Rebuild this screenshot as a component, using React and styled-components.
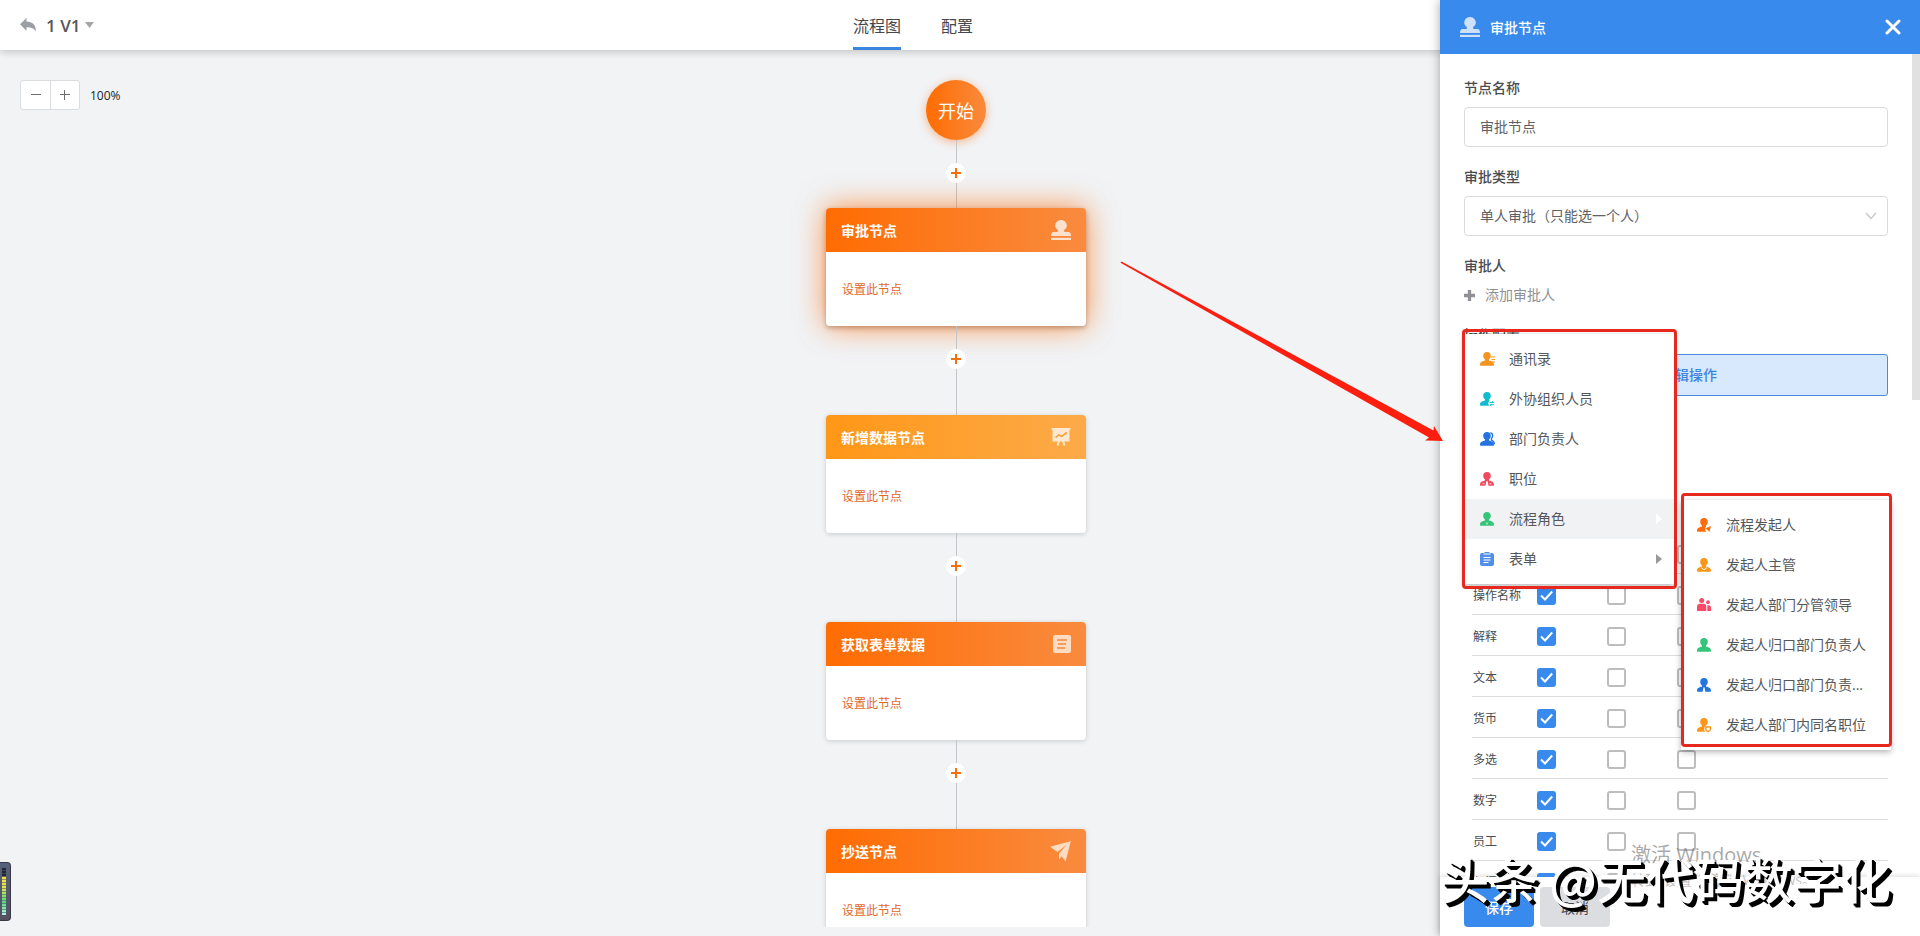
import React, { useState } from "react";
import styled, { createGlobalStyle, css } from "styled-components";

const GlobalStyle = createGlobalStyle`
  * {
    box-sizing: border-box;
  }
  body {
    margin: 0;
    color: #4a4c50;
    font-family: "Open Sans", "Noto Sans CJK SC", sans-serif;
    font-size: 14px;
  }
  button, input, select {
    font-family: inherit;
    font-size: inherit;
    color: inherit;
  }
  button {
    padding: 0;
    border: none;
    background: none;
    cursor: pointer;
  }
`;

const Page = styled.div`
  position: relative;
  display: flex;
  flex-direction: column;
  height: 100vh;
  overflow: hidden;
  background: #f1f3f5;
`;

/* top bar */
const Header = styled.header`
  position: relative;
  z-index: 1;
  display: grid;
  grid-template-columns: 1fr auto 1fr;
  flex: none;
  height: 50px;
  padding: 0 114px 0 20px;
  background: #fff;
  box-shadow: 0 2px 8px rgba(0, 0, 0, 0.2);
`;
const TitleArea = styled.div`
  display: flex;
  align-items: center;
  gap: 10px;
`;
const BackButton = styled.button`
  display: flex;
  color: #9b9ea3;
`;
const VersionButton = styled.button`
  display: flex;
  align-items: center;
  gap: 5px;
  white-space: nowrap;
  font-size: 17px;
  font-weight: 600;
  color: #55575b;
`;
const Tabs = styled.nav`
  display: flex;
  gap: 40px;
`;
const Tab = styled.a`
  display: flex;
  align-items: center;
  height: 50px;
  padding-top: 2px;
  border-bottom: 3px solid ${(p) => (p.$active ? "#3a86df" : "transparent")};
  color: #45474a;
  font-size: 16px;
  text-decoration: none;
`;

/* flow canvas */
const Canvas = styled.main`
  position: relative;
  flex: 1;
  min-height: 0;
  margin-bottom: 9px;
  padding: 30px 8px 0 0;
  overflow: hidden;
`;
const ZoomBar = styled.div`
  position: absolute;
  top: 30px;
  left: 20px;
  display: flex;
  align-items: center;
  gap: 10px;
  color: #222;
  font-size: 12px;
`;
const ZoomButtons = styled.div`
  display: flex;
  border: 1px solid #dadcdf;
  border-radius: 3px;
  background: #fff;
`;
const ZoomButton = styled.button`
  display: flex;
  align-items: center;
  justify-content: center;
  width: 29px;
  height: 28px;
  color: #6a6c70;
  & + & {
    border-left: 1px solid #dadcdf;
  }
`;
const Flow = styled.div`
  display: flex;
  flex-direction: column;
  align-items: center;
`;
const StartNode = styled.div`
  display: flex;
  flex: none;
  align-items: center;
  justify-content: center;
  width: 60px;
  height: 60px;
  border-radius: 50%;
  background: linear-gradient(90deg, #ff6c02, #f98a3c);
  box-shadow: 0 2px 8px rgba(255, 120, 30, 0.5);
  color: #fff;
  font-size: 18px;
`;
const Connector = styled.div`
  display: flex;
  flex: none;
  flex-direction: column;
  align-items: center;
  height: ${(p) => (p.$short ? 68 : 89)}px;
  padding-top: 23px;
  background: linear-gradient(#c3c5c9, #c3c5c9) center / 1px 100% no-repeat;
`;
const AddNodeButton = styled.button`
  display: flex;
  align-items: center;
  justify-content: center;
  width: 20px;
  height: 20px;
  border-radius: 50%;
  background: #fff;
  color: #f26f12;
`;
const NodeCard = styled.section`
  width: 260px;
  flex: none;
  border-radius: 4px;
  background: #fff;
  box-shadow: 0 1px 5px rgba(0, 0, 0, 0.18);
  ${(p) =>
    p.$active &&
    css`
      box-shadow: 0 2px 5px rgba(120, 60, 20, 0.4),
        0 0 30px rgba(255, 110, 10, 0.75);
    `}
`;
const NodeHead = styled.div`
  display: flex;
  align-items: center;
  justify-content: space-between;
  height: 44px;
  padding: 0 15px;
  border-radius: 4px 4px 0 0;
  background: ${(p) =>
    p.$tone === "amber"
      ? "linear-gradient(90deg, #ff9717, #fcaa49)"
      : "linear-gradient(90deg, #ff6c02, #f98b3f)"};
  color: #fff;
  font-weight: 700;
`;
const NodeBody = styled.div`
  display: flex;
  align-items: center;
  height: 74px;
  padding: 0 16px;
`;
const NodeLink = styled.button`
  color: #e2671f;
  font-size: 12px;
`;

/* right side panel */
const Panel = styled.aside`
  position: absolute;
  top: 0;
  right: 0;
  bottom: 0;
  z-index: 2;
  display: flex;
  flex-direction: column;
  width: 480px;
  background: #fff;
  box-shadow: 0 0 10px rgba(0, 0, 0, 0.35);
`;
const PanelHead = styled.div`
  display: flex;
  flex: none;
  align-items: center;
  gap: 10px;
  height: 54px;
  padding: 0 19px 0 20px;
  background: #388aed;
  color: #fff;
  font-weight: 500;
`;
const CloseButton = styled.button`
  display: flex;
  margin-left: auto;
`;
const PanelBody = styled.div`
  position: relative;
  flex: 1;
  min-height: 0;
  padding: 23px 32px 0 24px;
  overflow: hidden;
`;
const ScrollThumb = styled.div`
  position: absolute;
  top: 0;
  right: 0;
  width: 8px;
  height: 346px;
  background: #e1e1e2;
`;
const Field = styled.div`
  position: relative;
  display: flex;
  flex-direction: column;
  align-items: flex-start;
  gap: 8px;
  margin-bottom: 19px;
`;
const Label = styled.label`
  line-height: 22px;
  font-weight: 500;
`;
const control = css`
  width: 100%;
  height: 40px;
  padding: 0 15px 2px;
  border: 1px solid #d9dadd;
  border-radius: 4px;
  background: #fff;
  color: #606266;
  appearance: none;
`;
const TextInput = styled.input`
  ${control}
`;
const SelectWrap = styled.div`
  display: grid;
  width: 100%;
  align-items: center;
  & > * {
    grid-area: 1 / 1;
  }
  svg {
    justify-self: end;
    margin-right: 11px;
    pointer-events: none;
  }
`;
const Select = styled.select`
  ${control}
`;
const AddButton = styled.button`
  display: flex;
  align-items: center;
  gap: 10px;
  line-height: 20px;
  color: #8f9195;
`;
const EditButton = styled.button`
  width: 100%;
  height: 42px;
  padding: 0 0 2px 26px;
  border: 1px solid #4a8cdb;
  border-radius: 3px;
  background: #d8e8fd;
  color: #3d86e0;
  font-weight: 500;
`;

/* permission table */
const Table = styled.table`
  width: calc(100% - 8px);
  margin: 136px 0 0 8px;
  border-collapse: collapse;
  table-layout: fixed;
  font-size: 12px;
`;
const Row = styled.tr`
  height: 41px;
  border-bottom: 1px solid #dcdddf;
`;
const NameCell = styled.th`
  width: 65px;
  padding: 2px 0 0 1px;
  font-weight: 400;
  text-align: left;
  white-space: nowrap;
`;
const CheckCell = styled.td`
  width: 70px;
  padding: 4px 0 0;
`;
const CheckWrap = styled.span`
  display: grid;
  width: 19px;
  height: 19px;
  & > * {
    grid-area: 1 / 1;
  }
  svg {
    place-self: center;
    pointer-events: none;
  }
`;
const CheckInput = styled.input`
  width: 19px;
  height: 19px;
  margin: 0;
  border: 2px solid #bcbdbf;
  border-radius: 3px;
  background: #fff;
  appearance: none;
  &:checked {
    border-color: #388aed;
    background: #388aed;
  }
`;
const Footer = styled.div`
  display: flex;
  flex: none;
  gap: 6px;
  padding: 10px 24px 9px;
  box-shadow: 0 -1px 5px rgba(0, 0, 0, 0.14);
`;
const FooterButton = styled.button`
  width: 70px;
  height: 40px;
  border-radius: 4px;
  background: ${(p) => (p.$primary ? "#388aed" : "#dcdde1")};
  color: ${(p) => (p.$primary ? "#fff" : "#4a4c50")};
  font-weight: ${(p) => (p.$primary ? 500 : 400)};
`;

/* approver menus */
const menuBox = css`
  position: absolute;
  z-index: 3;
  width: 210px;
  padding: 5px 0;
  background: #fff;
  box-shadow: 0 2px 6px rgba(0, 0, 0, 0.3);
`;
const Menu = styled.div`
  ${menuBox}
  top: 79px;
  left: 0;
`;
const SubMenu = styled.div`
  ${menuBox}
  top: 166px;
  left: 217px;
`;
const MenuItem = styled.button`
  display: flex;
  align-items: center;
  gap: 15px;
  width: 100%;
  height: 40px;
  padding: 0 12px 0 16px;
  background: ${(p) => (p.$active ? "#f1f2f4" : "none")};
  text-align: left;
`;
const MenuText = styled.span`
  flex: 1;
  padding-bottom: 2px;
  color: #55575b;
  white-space: nowrap;
`;
const RedFrame = styled.div`
  position: absolute;
  inset: ${(p) => p.$inset};
  border: 3px solid #e7281e;
  border-radius: 4px;
  pointer-events: none;
`;

/* things lying over the page */
const Arrow = styled.svg`
  position: absolute;
  top: 260px;
  right: 476px;
  z-index: 4;
  pointer-events: none;
`;
const Meter = styled.div`
  position: absolute;
  left: 0;
  bottom: 15px;
  z-index: 4;
  width: 11px;
  height: 59px;
  padding: 5px 0 0 2px;
  border: 1px solid #3b3846;
  border-left: none;
  border-radius: 0 4px 4px 0;
  background: linear-gradient(#55617a, #54505f);
`;
const MeterBars = styled.div`
  width: 4px;
  height: 47px;
  background: repeating-linear-gradient(
      transparent 0 2px,
      rgba(77, 85, 104, 0.6) 2px 3px
    ),
    linear-gradient(#222831 0 8px, #f6e23c 9px, #e0e84c 20px, #4fdc7c 34px, #b8f4ec);
`;
const Activate = styled.div`
  position: absolute;
  right: 104px;
  bottom: 46px;
  z-index: 5;
  color: rgba(130, 130, 130, 0.5);
  font-size: 14px;
  line-height: 20px;
  pointer-events: none;
`;
const ActivateTitle = styled.div`
  color: rgba(120, 120, 120, 0.65);
  font-size: 20px;
  line-height: 30px;
`;
const Signature = styled.div`
  position: absolute;
  right: 29px;
  bottom: 28px;
  z-index: 6;
  color: #fff;
  font-family: "Noto Sans CJK SC", sans-serif;
  font-size: 49px;
  font-weight: 500;
  line-height: 60px;
  white-space: nowrap;
  text-shadow: 2px 2px 0 #000, 3px 3px 0 #000, 4px 4px 0 #000;
  pointer-events: none;
`;

const StampIcon = () => (
  <svg width="20" height="20" viewBox="0 0 20 20" fill="currentColor" opacity=".75">
    <path d="M10 0a5.6 5.6 0 0 1 5.8 5.4c0 2.2-1.2 3.4-2.4 4.4-.6.6-.4 2.2.6 2.2h3.4c1.6 0 2.6 1.2 2.6 4H0c0-2.8 1-4 2.6-4H6c1 0 1.2-1.6.6-2.2C5.4 8.8 4.2 7.6 4.2 5.4A5.6 5.6 0 0 1 10 0z" />
    <path d="M0 17.800h20V20H0z" />
  </svg>
);
const BoardIcon = () => (
  <svg width="20" height="20" viewBox="0 0 20 20" opacity=".75">
    <path d="M.5 1h19v1.800H18.500V14.500H1.500V2.800H.5z" fill="#fff" />
    <path d="M8 14 6.500 18.500M12 14l1.500 4.500" stroke="#fff" strokeWidth="2" />
    <path d="m4.500 10.500 3.300-2.700 3 1.500 5-4" fill="none" stroke="#f79b2d" strokeWidth="1.500" />
  </svg>
);
const FormIcon = () => (
  <svg width="18" height="18" viewBox="0 0 18 18">
    <rect width="18" height="18" rx="2" fill="#fddcc4" />
    <path d="M4 5h10M5 9h8M4 13h8" stroke="#f4863a" strokeWidth="1.600" />
  </svg>
);
const PlaneIcon = () => (
  <svg width="21" height="21" viewBox="0 0 21 21" fill="#fddcc4">
    <path d="M20.800.3 0 5.800l7.500 5.200L17 3.500 9 12.500V18.500l2.700-3.300 3.900 5.400z" />
  </svg>
);
const PlusIcon = ({ size = 10, weight = 2 }) => (
  <svg width={size} height={size} viewBox="0 0 10 10">
    <path d="M0 5h10M5 0v10" stroke="currentColor" strokeWidth={weight} />
  </svg>
);

// small person glyph, each kind carries its own badge
const badges = {
  contacts: <path d="M11 5h4M11.500 7.500h3.500M11.500 10h3.500" stroke="currentColor" />,
  outside: (
    <g>
      <circle cx="12" cy="11.500" r="3.600" fill="#fff" />
      <path d="M9.500 10.500h4l-1.500-1.200M14 12.700h-4l1.500 1.200" stroke="currentColor" fill="none" />
    </g>
  ),
  leader: (
    <path
      d="M10.500.8c2.800.6 2.600 4.200 1 5.700v1.700c1.800.6 2.700 1.800 2.900 4"
      stroke="currentColor"
      strokeWidth="1.400"
      fill="none"
    />
  ),
  post: (
    <g fill="#fff">
      <path d="M6.300 9.300h1.400l.8 4.700h-3z" />
      <path d="M2.500 11.500h2v.8h-2zM9.500 11.500h2v.8h-2z" />
    </g>
  ),
  role: <path d="m5.500 9.500 1.500 2 1.500-2L7 13z" fill="#fff" />,
  starter: (
    <g>
      <circle cx="11.500" cy="11" r="3.300" fill="#fff" />
      <path d="M8.300 10.600 14 8l-1.600 6-1.400-1.800z" fill="currentColor" />
    </g>
  ),
  manager: <path d="M4 9.600 7 11.800l3-2.200" stroke="#fff" fill="none" />,
  plain: null,
  tie: <path d="M6.400 9.500h1.200l.7 4.500H5.700z" fill="#fff" />,
  same: (
    <g>
      <circle cx="11" cy="11" r="3.800" fill="#fff" />
      <path
        d="M8.800 9h4.600v2.200c0 1.300-1 2-2.300 2.500-1.300-.5-2.300-1.200-2.300-2.500z"
        stroke="currentColor"
        strokeWidth="1.400"
        fill="none"
      />
    </g>
  ),
};

const MenuIcon = ({ kind, color }) => {
  if (kind === "form") {
    return (
      <svg width="14" height="14" viewBox="0 0 14 14" color={color}>
        <path
          d="M2 1h2.500V0h5v1H12c1 0 2 .8 2 2v9c0 1-.8 2-2 2H2c-1.200 0-2-1-2-2V3c0-1.200.8-2 2-2z"
          fill="currentColor"
        />
        <path d="M3.500 2h7M3.500 5.500h7M3.500 8h7M3.500 10.500h5" stroke="#fff" strokeWidth="1.100" />
      </svg>
    );
  }
  if (kind === "group") {
    return (
      <svg width="14" height="14" viewBox="0 0 14 14" fill={color}>
        <circle cx="4.700" cy="2.500" r="2.500" />
        <circle cx="11" cy="4.200" r="1.900" />
        <path d="M0 13V9c0-2 1.300-3.200 3-3.200h3.500C8.300 5.800 9.300 7 9.300 9v4z" />
        <path d="M10.300 13V7.200h1.200c1.600 0 2.500 1 2.500 2.500V13z" />
      </svg>
    );
  }
  return (
    <svg width="14" height="14" viewBox="0 0 14 14" color={color} overflow="visible">
      <path
        d="M7 0c2.400 0 3.800 1.600 3.800 3.800 0 1.800-.8 3-1.800 3.800v1c2.600.8 5 1.300 5 4.200 0 .7-.4 1-1 1H1c-.6 0-1-.3-1-1 0-2.900 2.400-3.400 5-4.200v-1c-1-.8-1.800-2-1.800-3.800C3.200 1.600 4.600 0 7 0z"
        fill="currentColor"
      />
      {badges[kind]}
    </svg>
  );
};

const nodes = [
  { title: "审批节点", icon: <StampIcon />, active: true },
  { title: "新增数据节点", icon: <BoardIcon />, tone: "amber" },
  { title: "获取表单数据", icon: <FormIcon /> },
  { title: "抄送节点", icon: <PlaneIcon /> },
];

const approverItems = [
  { text: "通讯录", kind: "contacts", color: "#f7941e" },
  { text: "外协组织人员", kind: "outside", color: "#12bcd0" },
  { text: "部门负责人", kind: "leader", color: "#2373e0" },
  { text: "职位", kind: "post", color: "#f2495f" },
  { text: "流程角色", kind: "role", color: "#35c57a", arrow: true, active: true },
  { text: "表单", kind: "form", color: "#5190ea", arrow: true },
];

const roleItems = [
  { text: "流程发起人", kind: "starter", color: "#fb6d0a" },
  { text: "发起人主管", kind: "manager", color: "#fb9619" },
  { text: "发起人部门分管领导", kind: "group", color: "#fa4a68" },
  { text: "发起人归口部门负责人", kind: "plain", color: "#35c57a" },
  { text: "发起人归口部门负责...", kind: "tie", color: "#2373e0" },
  { text: "发起人部门内同名职位", kind: "same", color: "#fb9619" },
];

const fieldNames = ["标题", "操作名称", "解释", "文本", "货币", "多选", "数字", "员工", "部门"];

const MenuList = ({ items }) =>
  items.map((item) => (
    <MenuItem key={item.text} type="button" $active={item.active}>
      <MenuIcon kind={item.kind} color={item.color} />
      <MenuText>{item.text}</MenuText>
      {item.arrow && (
        <svg width="6" height="10" viewBox="0 0 6 10" fill={item.active ? "#fff" : "#97999d"}>
          <path d="M0 0l6 5-6 5z" />
        </svg>
      )}
    </MenuItem>
  ));

const PermissionRow = ({ name, id }) => {
  const [values, setValues] = useState([true, false, false]);
  const toggle = (i) => setValues(values.map((v, n) => (n === i ? !v : v)));
  return (
    <Row>
      <NameCell scope="row" id={id}>
        {name}
      </NameCell>
      {values.map((checked, i) => (
        <CheckCell key={i}>
          <CheckWrap>
            <CheckInput
              type="checkbox"
              aria-labelledby={id}
              checked={checked}
              onChange={() => toggle(i)}
            />
            {checked && (
              <svg width="13" height="11" viewBox="0 0 13 11">
                <path d="M1 5.500 5 9.500 12.200 1.500" fill="none" stroke="#fff" strokeWidth="2" />
              </svg>
            )}
          </CheckWrap>
        </CheckCell>
      ))}
      <td />
    </Row>
  );
};

const NodePanel = () => {
  return (
    <Panel>
      <PanelHead>
        <StampIcon />
        审批节点
        <CloseButton type="button" aria-label="关闭">
          <svg width="16" height="16" viewBox="0 0 16 16">
            <path d="m2 2 12 12M14 2 2 14" stroke="#fff" strokeWidth="3" strokeLinecap="round" />
          </svg>
        </CloseButton>
      </PanelHead>
      <PanelBody>
        <ScrollThumb />
        <Field>
          <Label htmlFor="node-name">节点名称</Label>
          <TextInput id="node-name" defaultValue="审批节点" />
        </Field>
        <Field>
          <Label htmlFor="node-type">审批类型</Label>
          <SelectWrap>
            <Select id="node-type">
              <option>单人审批（只能选一个人）</option>
            </Select>
            <svg width="12" height="8" viewBox="0 0 12 8">
              <path d="m1 1 5 5.500L11 1" fill="none" stroke="#c8cacf" strokeWidth="1.500" />
            </svg>
          </SelectWrap>
        </Field>
        <Field>
          <Label as="span">审批人</Label>
          <AddButton type="button">
            <PlusIcon size={11} weight={3} />
            添加审批人
          </AddButton>
          <Menu>
            <MenuList items={approverItems} />
            <RedFrame $inset="-5px -3px -5px -2px" />
            <SubMenu>
              <MenuList items={roleItems} />
              <RedFrame $inset="-7px -1px 3px 0" />
            </SubMenu>
          </Menu>
        </Field>
        <Field>
          <Label as="span">操作配置</Label>
          <EditButton type="button">编辑操作</EditButton>
        </Field>
        <Table>
          <tbody>
            {fieldNames.map((name, i) => (
              <PermissionRow key={name} name={name} id={`field-${i}`} />
            ))}
          </tbody>
        </Table>
      </PanelBody>
      <Footer>
        <FooterButton type="button" $primary>
          保存
        </FooterButton>
        <FooterButton type="button">取消</FooterButton>
      </Footer>
    </Panel>
  );
};

const App = () => {
  return (
    <>
      <GlobalStyle />
      <Page>
        <Header>
          <TitleArea>
            <BackButton type="button" aria-label="返回">
              <svg width="16" height="14" viewBox="0 0 16 14" fill="currentColor">
                <path d="M6.500 0v3.500C12.500 3.700 16 6.500 15.800 13.500 14 10.200 11 9 6.500 9.200v3.600L0 6.300z" />
              </svg>
            </BackButton>
            <VersionButton type="button">
              1 V1
              <svg width="9" height="6" viewBox="0 0 9 6" fill="#a3a5a9">
                <path d="M0 0h9L4.500 6z" />
              </svg>
            </VersionButton>
          </TitleArea>
          <Tabs>
            <Tab href="#flow" $active>
              流程图
            </Tab>
            <Tab href="#config">配置</Tab>
          </Tabs>
        </Header>
        <Canvas>
          <ZoomBar>
            <ZoomButtons>
              <ZoomButton type="button" aria-label="缩小">
                <svg width="10" height="10" viewBox="0 0 10 10">
                  <path d="M0 4.500h10" stroke="currentColor" />
                </svg>
              </ZoomButton>
              <ZoomButton type="button" aria-label="放大">
                <svg width="10" height="10" viewBox="0 0 10 10">
                  <path d="M0 4.500h10M4.500 0v10" stroke="currentColor" />
                </svg>
              </ZoomButton>
            </ZoomButtons>
            100%
          </ZoomBar>
          <Flow>
            <StartNode>开始</StartNode>
            {nodes.map((node, i) => (
              <React.Fragment key={node.title}>
                <Connector $short={i === 0}>
                  <AddNodeButton type="button" aria-label="添加节点">
                    <PlusIcon />
                  </AddNodeButton>
                </Connector>
                <NodeCard $active={node.active}>
                  <NodeHead $tone={node.tone}>
                    {node.title}
                    {node.icon}
                  </NodeHead>
                  <NodeBody>
                    <NodeLink type="button">设置此节点</NodeLink>
                  </NodeBody>
                </NodeCard>
              </React.Fragment>
            ))}
          </Flow>
        </Canvas>
        <NodePanel />
        <Arrow width="324" height="184" viewBox="0 0 324 184">
          <path d="M1.500 1.500 313.500 170.500 314 166 323 181 305 180.500 309 177.500.5 2.800z" fill="#fc1f10" />
        </Arrow>
        <Meter>
          <MeterBars />
        </Meter>
        <Activate>
          <ActivateTitle>激活 Windows</ActivateTitle>
          转到“设置”以激活 Windows。
        </Activate>
        <Signature>头条 @无代码数字化</Signature>
      </Page>
    </>
  );
};

export default App;
